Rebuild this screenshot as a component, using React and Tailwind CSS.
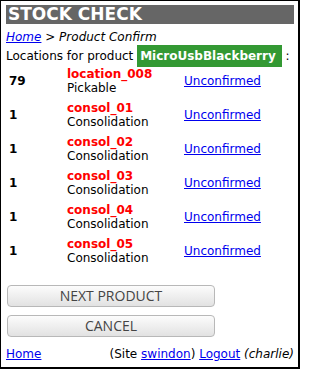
import React from 'react';

const rows = [
  { qty: '79', loc: 'location_008', kind: 'Pickable' },
  { qty: '1', loc: 'consol_01', kind: 'Consolidation' },
  { qty: '1', loc: 'consol_02', kind: 'Consolidation' },
  { qty: '1', loc: 'consol_03', kind: 'Consolidation' },
  { qty: '1', loc: 'consol_04', kind: 'Consolidation' },
  { qty: '1', loc: 'consol_05', kind: 'Consolidation' },
];

const linkCls = 'text-[#0000ee] underline';

const Button = ({ children }) => (
  <button className="ml-[1px] w-[208px] h-[22px] rounded-[4px] border border-[#b8b8b8] bg-gradient-to-b from-[#fcfcfc] to-[#e2e2e2] font-['Open_Sans',sans-serif] text-[14px] leading-[20px] text-[#444]">
    {children}
  </button>
);

export default function App() {
  return (
    <div className="w-[300px] h-[369px] bg-white border-l border-t border-r-2 border-b-2 border-black pl-[5px] pr-[4px] pt-[4px] font-['DejaVu_Sans',sans-serif] text-[12px] leading-[14px] text-black">
      {/* Title bar */}
      <div className="h-[19px] bg-[#666666] pl-[2px] text-white font-bold text-[17px] leading-[19px]">
        STOCK CHECK
      </div>

      {/* Breadcrumb */}
      <div className="mt-[6px] italic">
        <a href="#" className={linkCls}>Home</a> &gt; Product Confirm
      </div>

      <div className="mt-[1px]">
        Locations for product{' '}
        <span className="inline-block bg-[#339933] text-white font-bold pl-[3px] pr-[6px] pt-[4px] pb-[4px]">
          MicroUsbBlackberry
        </span>{' '}
        :
      </div>

      {/* Locations */}
      <div className="flex flex-col gap-[6px]">
        {rows.map((r) => (
          <div key={r.loc} className="flex items-center h-[28px]">
            <div className="w-[61px] pl-[3px] font-bold">{r.qty}</div>
            <div className="w-[117px]">
              <div className="text-[#ff0000] font-bold">{r.loc}</div>
              <div>{r.kind}</div>
            </div>
            <a href="#" className={linkCls}>Unconfirmed</a>
          </div>
        ))}
      </div>

      {/* Actions */}
      <div className="mt-[20px] flex flex-col gap-[8px]">
        <Button>NEXT PRODUCT</Button>
        <Button>CANCEL</Button>
      </div>

      {/* Footer */}
      <div className="mt-[10px] flex justify-between">
        <a href="#" className={linkCls}>Home</a>
        <span>
          (Site <a href="#" className={linkCls}>swindon</a>){' '}
          <a href="#" className={linkCls}>Logout</a> <i>(charlie)</i>
        </span>
      </div>
    </div>
  );
}
